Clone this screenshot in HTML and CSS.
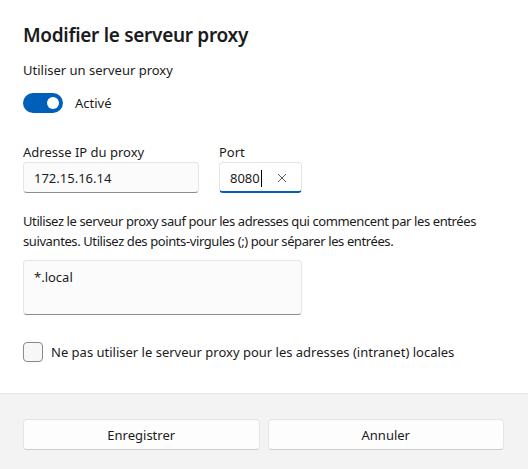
FILE: index.html
```html
<!DOCTYPE html>
<html lang="fr">
<head>
<meta charset="utf-8">
<title>Modifier le serveur proxy</title>
<link rel="stylesheet" href="styles.css">
</head>
<body>
<main class="dialog">
  <section class="content">
    <h1 class="title">Modifier le serveur proxy</h1>
    <p class="setting-label">Utiliser un serveur proxy</p>
    <div class="toggle-row">
      <span class="toggle is-on"><span class="toggle-knob"></span></span>
      <span class="toggle-text">Activé</span>
    </div>

    <div class="fields">
      <div class="field field-ip">
        <span class="field-header">Adresse IP du proxy</span>
        <div class="textbox">172.15.16.14</div>
      </div>
      <div class="field field-port">
        <span class="field-header">Port</span>
        <div class="textbox is-focused">
          <span class="textbox-value">8080<span class="caret"></span></span>
          <svg class="clear-icon" width="10" height="10" viewBox="0 0 10 10" aria-hidden="true">
            <path d="M1 1 L9 9 M9 1 L1 9" stroke="#5c5c5c" stroke-width="1" fill="none"/>
          </svg>
        </div>
      </div>
    </div>

    <p class="hint">Utilisez le serveur proxy sauf pour les adresses qui commencent par les entrées suivantes. Utilisez des points-virgules (;) pour séparer les entrées.</p>
    <div class="textarea">*.local</div>

    <div class="check-row">
      <span class="checkbox"></span>
      <span class="check-text">Ne pas utiliser le serveur proxy pour les adresses (intranet) locales</span>
    </div>
  </section>

  <footer class="actions">
    <button class="btn" type="button">Enregistrer</button>
    <button class="btn" type="button">Annuler</button>
  </footer>
</main>
</body>
</html>
```

FILE: styles.css
```css
* {
  box-sizing: border-box;
}

html, body {
  margin: 0;
  padding: 0;
  background: #ffffff;
}

body {
  font-family: "Noto Sans", "Open Sans", sans-serif;
  font-size: 13px;
  line-height: 20px;
  color: #1b1b1b;
}

.dialog {
  width: 528px;
  height: 469px;
  display: flex;
  flex-direction: column;
}

.content {
  padding: 21px 20px 31px 23px;
  display: flex;
  flex-direction: column;
}

.title {
  margin: 0;
  font-size: 19px;
  line-height: 28px;
  font-weight: 600;
  letter-spacing: -0.3px;
}

.setting-label {
  margin: 11px 0 0;
}

.toggle-row {
  margin-top: 13px;
  display: flex;
  align-items: center;
  gap: 12px;
  height: 20px;
}

.toggle {
  width: 40px;
  height: 20px;
  border-radius: 10px;
  background: #005fb8;
  display: flex;
  align-items: center;
  justify-content: flex-end;
  padding-right: 4px;
}

.toggle-knob {
  width: 12px;
  height: 12px;
  border-radius: 50%;
  background: #ffffff;
}

.fields {
  margin-top: 29px;
  display: flex;
  gap: 20px;
}

.field {
  display: flex;
  flex-direction: column;
}

.field-ip {
  width: 176px;
}

.field-port {
  width: 83px;
}

.field-header {
  display: block;
  height: 20px;
}

.textbox {
  height: 31px;
  border: 1px solid #e5e5e5;
  border-bottom-color: #8d8d8d;
  border-radius: 4px;
  background: #fbfbfb;
  padding: 5px 10px 0 10px;
  display: flex;
  align-items: flex-start;
  justify-content: space-between;
  line-height: 20px;
}

.textbox.is-focused {
  background: #ffffff;
  border-bottom: 2px solid #005fb8;
}

.textbox-value {
  display: inline-flex;
  align-items: center;
}

.caret {
  display: inline-block;
  width: 1px;
  height: 17px;
  margin-left: 1px;
  background: #000000;
}

.clear-icon {
  margin-top: 5px;
  margin-right: 4px;
}

.hint {
  margin: 18px 0 0;
  letter-spacing: -0.4px;
}

.textarea {
  margin-top: 9px;
  width: 279px;
  height: 55px;
  border: 1px solid #e5e5e5;
  border-bottom-color: #8d8d8d;
  border-radius: 4px;
  background: #fbfbfb;
  padding: 6px 10px;
}

.check-row {
  margin-top: 27px;
  display: flex;
  align-items: center;
  gap: 8px;
  height: 20px;
}

.checkbox {
  width: 20px;
  height: 20px;
  border: 1px solid #8a8a8a;
  border-radius: 4px;
  background: #f7f7f7;
  flex: none;
}

.actions {
  flex: 1;
  background: #f3f3f3;
  border-top: 1px solid #e5e5e5;
  padding: 25px 24px 0 23px;
  display: grid;
  grid-template-columns: 1fr 1fr;
  column-gap: 8px;
  align-content: start;
}

.btn {
  height: 31px;
  font: inherit;
  color: #1b1b1b;
  background: #fdfdfd;
  border: 1px solid #e5e5e5;
  border-bottom-color: #cccccc;
  border-radius: 4px;
  padding: 0 12px;
}
```
